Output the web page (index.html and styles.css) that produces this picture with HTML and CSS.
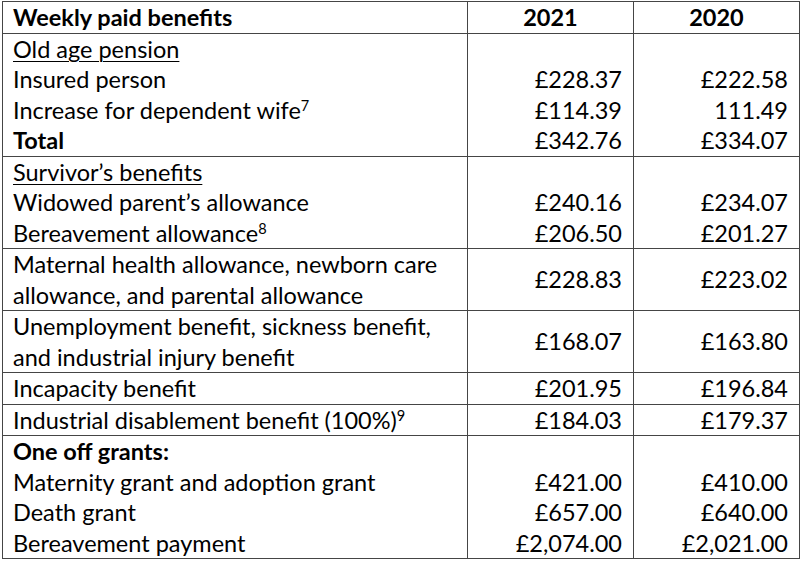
FILE: index.html
```html
<!DOCTYPE html>
<html lang="en">
<head>
<meta charset="utf-8">
<title>Weekly paid benefits</title>
<link rel="stylesheet" href="styles.css">
</head>
<body>
<table class="benefits">
  <colgroup>
    <col class="col-label">
    <col class="col-num">
    <col class="col-num2">
  </colgroup>
  <thead>
    <tr>
      <th class="label">Weekly paid benefits</th>
      <th class="year">2021</th>
      <th class="year">2020</th>
    </tr>
  </thead>
  <tbody>
    <tr>
      <td class="label">
        <div class="line"><span class="ul">Old age pension</span></div>
        <div class="line">Insured person</div>
        <div class="line">Increase for dependent wife<sup>7</sup></div>
        <div class="line"><b>Total</b></div>
      </td>
      <td class="num">
        <div class="line">&nbsp;</div>
        <div class="line">£228.37</div>
        <div class="line">£114.39</div>
        <div class="line">£342.76</div>
      </td>
      <td class="num">
        <div class="line">&nbsp;</div>
        <div class="line">£222.58</div>
        <div class="line">111.49</div>
        <div class="line">£334.07</div>
      </td>
    </tr>
    <tr>
      <td class="label">
        <div class="line"><span class="ul">Survivor’s benefits</span></div>
        <div class="line">Widowed parent’s allowance</div>
        <div class="line">Bereavement allowance<sup>8</sup></div>
      </td>
      <td class="num">
        <div class="line">&nbsp;</div>
        <div class="line">£240.16</div>
        <div class="line">£206.50</div>
      </td>
      <td class="num">
        <div class="line">&nbsp;</div>
        <div class="line">£234.07</div>
        <div class="line">£201.27</div>
      </td>
    </tr>
    <tr>
      <td class="label">
        <div class="line">Maternal health allowance, newborn care</div>
        <div class="line">allowance, and parental allowance</div>
      </td>
      <td class="num">£228.83</td>
      <td class="num">£223.02</td>
    </tr>
    <tr>
      <td class="label">
        <div class="line">Unemployment benefit, sickness benefit,</div>
        <div class="line">and industrial injury benefit</div>
      </td>
      <td class="num">£168.07</td>
      <td class="num">£163.80</td>
    </tr>
    <tr>
      <td class="label">Incapacity benefit</td>
      <td class="num">£201.95</td>
      <td class="num">£196.84</td>
    </tr>
    <tr>
      <td class="label">Industrial disablement benefit (100%)<sup>9</sup></td>
      <td class="num">£184.03</td>
      <td class="num">£179.37</td>
    </tr>
    <tr>
      <td class="label">
        <div class="line"><b>One off grants:</b></div>
        <div class="line">Maternity grant and adoption grant</div>
        <div class="line">Death grant</div>
        <div class="line">Bereavement payment</div>
      </td>
      <td class="num">
        <div class="line">&nbsp;</div>
        <div class="line">£421.00</div>
        <div class="line">£657.00</div>
        <div class="line">£2,074.00</div>
      </td>
      <td class="num">
        <div class="line">&nbsp;</div>
        <div class="line">£410.00</div>
        <div class="line">£640.00</div>
        <div class="line">£2,021.00</div>
      </td>
    </tr>
  </tbody>
</table>
</body>
</html>
```

FILE: styles.css
```css
html, body {
  background: #ffffff;
}

body {
  margin: 1px 0 0 2px;
  font-family: Lato, "Open Sans", sans-serif;
  color: #000000;
}

.benefits {
  border-collapse: collapse;
  table-layout: fixed;
  width: 797px;
  font-size: 23.5px;
  line-height: 30.5px;
}

.col-label { width: 465px; }
.col-num { width: 166px; }
.col-num2 { width: 166px; }

.benefits th,
.benefits td {
  border: 1px solid #454545;
  padding: 0;
  vertical-align: middle;
}

.benefits th {
  font-weight: 700;
}

.benefits .label {
  text-align: left;
  padding-left: 10px;
  white-space: nowrap;
}

.benefits .year {
  text-align: center;
}

.benefits .num {
  text-align: right;
  padding-right: 11px;
}

.line {
  height: 30.5px;
  white-space: nowrap;
}

.ul {
  text-decoration: underline;
  text-decoration-thickness: 1px;
  text-underline-offset: 3px;
}

b {
  font-weight: 700;
}

sup {
  font-size: 0.62em;
  line-height: 0;
  vertical-align: 0.55em;
}
```
